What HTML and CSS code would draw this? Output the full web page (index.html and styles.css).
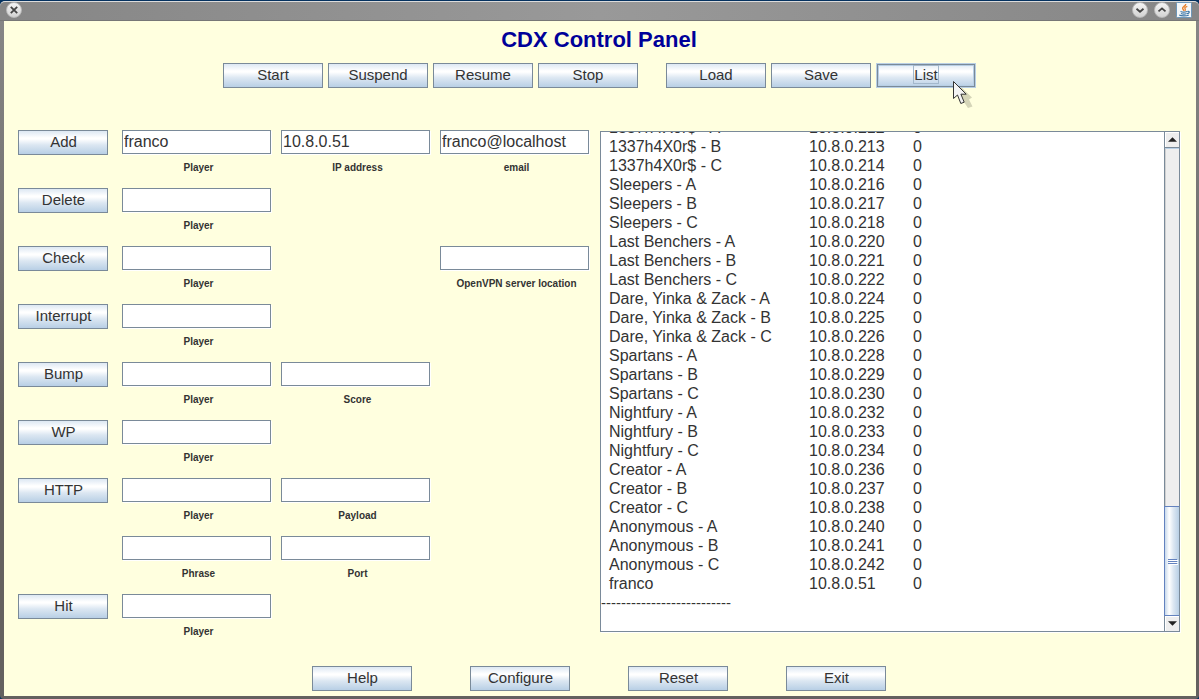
FILE: index.html
```
<!DOCTYPE html>
<html lang="en">
<head>
<meta charset="utf-8">
<title>CDX Control Panel</title>
<link rel="stylesheet" href="styles.css">
</head>
<body>
<div class="window">
  <header class="titlebar">
    <button class="orb" aria-label="Close"><svg viewBox="1 1 14 14"><path d="M4.800 4.800l6.400 6.400M11.200 4.800l-6.400 6.400"/></svg></button>
    <span class="spacer"></span>
    <button class="orb" aria-label="Minimize"><svg viewBox="1 1 14 14"><path d="M4.500 6.800L8 9.800l3.500-3"/></svg></button>
    <button class="orb" aria-label="Maximize"><svg viewBox="1 1 14 14"><path d="M4.500 9.400L8 6.400l3.500 3"/></svg></button>
    <svg class="java" viewBox="0 0 16 16" aria-hidden="true">
      <rect x=".5" y=".5" width="15" height="15" rx="1" fill="#f4f6f8" stroke="#6d96b8"/>
      <path d="M9.800 2C10 4 6 4.800 6.600 6.500C6.900 7.500 8 8 7.700 9M11.300 4.300C9 5 8.300 5.800 9.200 7C9.600 7.700 9.400 8.200 8.800 8.800" fill="none" stroke="#e8802c" stroke-width="1.300"/>
      <path d="M4.500 9.500c1.500.7 5 .6 6.500 0M5 11.500c1.500.6 4.300.6 5.600 0M11.300 9.500c3-.8 2.400 2-.3 2.200M3.200 13c2 1.200 7.500 1.100 9.600-.1" fill="none" stroke="#3f77a6" stroke-width="1.200"/>
    </svg>
  </header>

  <div class="content">
    <h1>CDX Control Panel</h1>

    <div class="toolbar">
      <div class="group">
        <button class="btn">Start</button>
        <button class="btn">Suspend</button>
        <button class="btn">Resume</button>
        <button class="btn">Stop</button>
      </div>
      <div class="group">
        <button class="btn">Load</button>
        <button class="btn">Save</button>
        <div class="pointed">
          <button class="btn focused"><span>List</span></button>
          <svg class="cursor" viewBox="0 0 24 32" aria-hidden="true">
            <path class="cursor-shadow" d="M9 7l11 10.500-3 2 3.500 7-4.500 1.500-4-6-3 1z"/>
            <path class="cursor-arrow" d="M1.500 1.500v17l4-3.500 3.300 8.500 3.400-1.300-3.300-8h5.300z"/>
          </svg>
        </div>
      </div>
    </div>

    <main class="main">
      <form class="form">
        <button type="button" class="btn">Add</button>
        <label class="field"><input type="text" value="franco"><span>Player</span></label>
        <label class="field"><input type="text" value="10.8.0.51"><span>IP address</span></label>
        <label class="field"><input type="text" value="franco@localhost"><span>email</span></label>

        <button type="button" class="btn">Delete</button>
        <label class="field"><input type="text"><span>Player</span></label>

        <button type="button" class="btn">Check</button>
        <label class="field"><input type="text"><span>Player</span></label>
        <label class="field last"><input type="text"><span>OpenVPN server location</span></label>

        <button type="button" class="btn">Interrupt</button>
        <label class="field"><input type="text"><span>Player</span></label>

        <button type="button" class="btn">Bump</button>
        <label class="field"><input type="text"><span>Player</span></label>
        <label class="field"><input type="text"><span>Score</span></label>

        <button type="button" class="btn">WP</button>
        <label class="field"><input type="text"><span>Player</span></label>

        <button type="button" class="btn">HTTP</button>
        <label class="field"><input type="text"><span>Player</span></label>
        <label class="field"><input type="text"><span>Payload</span></label>

        <label class="field first"><input type="text"><span>Phrase</span></label>
        <label class="field"><input type="text"><span>Port</span></label>

        <button type="button" class="btn">Hit</button>
        <label class="field"><input type="text"><span>Player</span></label>
      </form>

      <section class="output" aria-label="Players">
        <div class="log">
          <table>
            <tbody>
              <tr><td>1337h4X0r$ - A</td><td>10.8.0.212</td><td>0</td></tr>
              <tr><td>1337h4X0r$ - B</td><td>10.8.0.213</td><td>0</td></tr>
              <tr><td>1337h4X0r$ - C</td><td>10.8.0.214</td><td>0</td></tr>
              <tr><td>Sleepers - A</td><td>10.8.0.216</td><td>0</td></tr>
              <tr><td>Sleepers - B</td><td>10.8.0.217</td><td>0</td></tr>
              <tr><td>Sleepers - C</td><td>10.8.0.218</td><td>0</td></tr>
              <tr><td>Last Benchers - A</td><td>10.8.0.220</td><td>0</td></tr>
              <tr><td>Last Benchers - B</td><td>10.8.0.221</td><td>0</td></tr>
              <tr><td>Last Benchers - C</td><td>10.8.0.222</td><td>0</td></tr>
              <tr><td>Dare, Yinka &amp; Zack - A</td><td>10.8.0.224</td><td>0</td></tr>
              <tr><td>Dare, Yinka &amp; Zack - B</td><td>10.8.0.225</td><td>0</td></tr>
              <tr><td>Dare, Yinka &amp; Zack - C</td><td>10.8.0.226</td><td>0</td></tr>
              <tr><td>Spartans - A</td><td>10.8.0.228</td><td>0</td></tr>
              <tr><td>Spartans - B</td><td>10.8.0.229</td><td>0</td></tr>
              <tr><td>Spartans - C</td><td>10.8.0.230</td><td>0</td></tr>
              <tr><td>Nightfury - A</td><td>10.8.0.232</td><td>0</td></tr>
              <tr><td>Nightfury - B</td><td>10.8.0.233</td><td>0</td></tr>
              <tr><td>Nightfury - C</td><td>10.8.0.234</td><td>0</td></tr>
              <tr><td>Creator - A</td><td>10.8.0.236</td><td>0</td></tr>
              <tr><td>Creator - B</td><td>10.8.0.237</td><td>0</td></tr>
              <tr><td>Creator - C</td><td>10.8.0.238</td><td>0</td></tr>
              <tr><td>Anonymous - A</td><td>10.8.0.240</td><td>0</td></tr>
              <tr><td>Anonymous - B</td><td>10.8.0.241</td><td>0</td></tr>
              <tr><td>Anonymous - C</td><td>10.8.0.242</td><td>0</td></tr>
              <tr><td>franco</td><td>10.8.0.51</td><td>0</td></tr>
            </tbody>
          </table>
          <p>--------------------------</p>
        </div>
        <div class="scrollbar">
          <button class="arrow up" aria-label="Scroll up"><svg viewBox="0 0 8 4"><path d="M0 4L4 0l4 4z"/></svg></button>
          <div class="track"><div class="thumb"><i></i><i></i><i></i></div></div>
          <button class="arrow" aria-label="Scroll down"><svg viewBox="0 0 8 4"><path d="M0 0l4 4 4-4z"/></svg></button>
        </div>
      </section>
    </main>

    <footer class="actions">
      <button class="btn">Help</button>
      <button class="btn">Configure</button>
      <button class="btn">Reset</button>
      <button class="btn">Exit</button>
    </footer>
  </div>
</div>
</body>
</html>
```
FILE: styles.css
```
* {
  box-sizing: border-box;
}

body {
  margin: 0;
  background: #04315f;
  color: #333;
  font-family: "Liberation Sans", Arial, sans-serif;
}

button,
input {
  margin: 0;
  padding: 0;
  color: inherit;
  font-family: inherit;
}

.window {
  display: flex;
  flex-direction: column;
  min-height: 100vh;
  padding: 0 3px 3px 4px;
  border-top: 1px solid #04315f;
  border-radius: 6px 6px 4px 4px;
  background: linear-gradient(#888, #646160 60%);
}

.titlebar {
  display: flex;
  align-items: center;
  gap: 6px;
  height: 20px;
  margin: 0 -3px 0 -4px;
  padding: 0 7px 2px 6px;
  border-top: 1px solid #dcdcdc;
  border-bottom: 1px solid #777;
  border-radius: 5px 5px 0 0;
  background: linear-gradient(90deg, #868686, #999 50%, #868686);
}

.spacer {
  flex: 1;
}

.orb {
  flex: none;
  width: 16px;
  height: 16px;
  border: 1px solid #b9b9b9;
  border-radius: 50%;
  background: linear-gradient(#f4f4f4, #d2d2d2);
}

.orb svg {
  display: block;
  width: 14px;
  height: 14px;
  fill: none;
  stroke: #444;
  stroke-width: 1.8;
}

.java {
  flex: none;
  width: 16px;
  height: 16px;
}

.content {
  display: flex;
  flex: 1;
  flex-direction: column;
  padding: 6px 16px 5px 14px;
  background: #ffffdf;
}

h1 {
  margin: 0 0 10px;
  color: #000099;
  font-size: 22px;
  line-height: 26px;
  text-align: center;
}

.toolbar {
  display: flex;
  justify-content: center;
  gap: 28px;
  margin-bottom: 42px;
}

.group {
  display: flex;
  gap: 5px;
}

.btn {
  width: 100px;
  height: 25px;
  padding: 0 0 2px 1px;
  border: 1px solid #7a8a99;
  background: linear-gradient(#dde8f3, #fff 30%, #fff 35%, #dce7f2 60%, #b8cfe5);
  font-size: 15px;
}

.focused {
  border: 1px solid #b8cfe5;
  box-shadow: inset 0 0 0 1px #7a8a99, inset 0 0 0 2px #b8cfe5;
}

.focused span {
  display: inline-block;
  border: 1px solid #a3b8cc;
  line-height: 17px;
}

.pointed {
  position: relative;
}

.cursor {
  position: absolute;
  top: 17px;
  left: 76px;
  width: 24px;
  height: 32px;
}

.cursor-shadow {
  fill: #d5d5b8;
}

.cursor-arrow {
  fill: #f4f4f4;
  stroke: #333;
}

.main {
  display: flex;
  flex: 1;
  gap: 11px;
  margin-bottom: 14px;
}

.form {
  display: grid;
  grid-template-columns: 94px 149px 149px 149px;
  grid-auto-rows: 58px;
  column-gap: 10px;
  align-items: start;
}

.form .btn {
  grid-column: 1;
  width: 90px;
}

.field {
  display: block;
}

.first {
  grid-column: 2;
}

.last {
  grid-column: 4;
}

.field input {
  display: block;
  width: 100%;
  height: 24px;
  padding-left: 1px;
  border: 1px solid #7a8a99;
  border-radius: 0;
  background: #fff;
  box-shadow: 1px 1px 0 #fff;
  font-size: 16px;
}

.field span {
  display: block;
  padding: 8px 0 0 4px;
  font-size: 10px;
  font-weight: bold;
  line-height: 12px;
  text-align: center;
  white-space: nowrap;
}

.output {
  display: flex;
  flex: 1;
  min-width: 340px;
  margin: 1px 0 20px;
  border: 1px solid #7a8a99;
  background: #fff;
  box-shadow: 1px 1px 0 #fff;
  font-size: 16px;
  line-height: 19px;
}

.log {
  display: flex;
  flex: 1;
  flex-direction: column;
  justify-content: flex-end;
  height: 499px;
  padding-bottom: 19px;
  overflow: hidden;
}

.log table {
  width: 330px;
  margin-left: 8px;
  border-collapse: collapse;
  table-layout: fixed;
}

.log td {
  width: 26px;
  padding: 0;
  white-space: nowrap;
}

.log td:nth-child(1) {
  width: 200px;
}

.log td:nth-child(2) {
  width: 104px;
}

.log p {
  margin: 0;
  font-size: 15px;
}

.scrollbar {
  display: flex;
  flex-direction: column;
  width: 15px;
  border-left: 1px solid #7a8a99;
  background: #eee;
}

.arrow {
  display: flex;
  align-items: center;
  justify-content: center;
  height: 15px;
  border: 0;
  background: #eee;
  box-shadow: inset 1px 1px 0 #fff;
}

.arrow svg {
  width: 9px;
  height: 5px;
  fill: #222;
}

.up {
  height: 16px;
  border-bottom: 1px solid #7a8a99;
}

.track {
  display: flex;
  flex: 1;
  flex-direction: column;
  justify-content: flex-end;
  border-top: 1px solid #b8cfe5;
  border-left: 1px solid #d0d0d0;
}

.thumb {
  display: flex;
  flex-direction: column;
  align-items: center;
  justify-content: center;
  gap: 1px;
  height: 110px;
  margin-left: -2px;
  border: 1px solid #6382bf;
  border-right: 0;
  background: linear-gradient(90deg, #c8d9eb, #fff 30%, #dce7f2 60%, #b8cfe5);
}

.thumb i {
  width: 9px;
  height: 1px;
  background: #6382bf;
  box-shadow: 1px 1px 0 #fff;
}

.actions {
  display: flex;
  justify-content: center;
  gap: 58px;
}
```
